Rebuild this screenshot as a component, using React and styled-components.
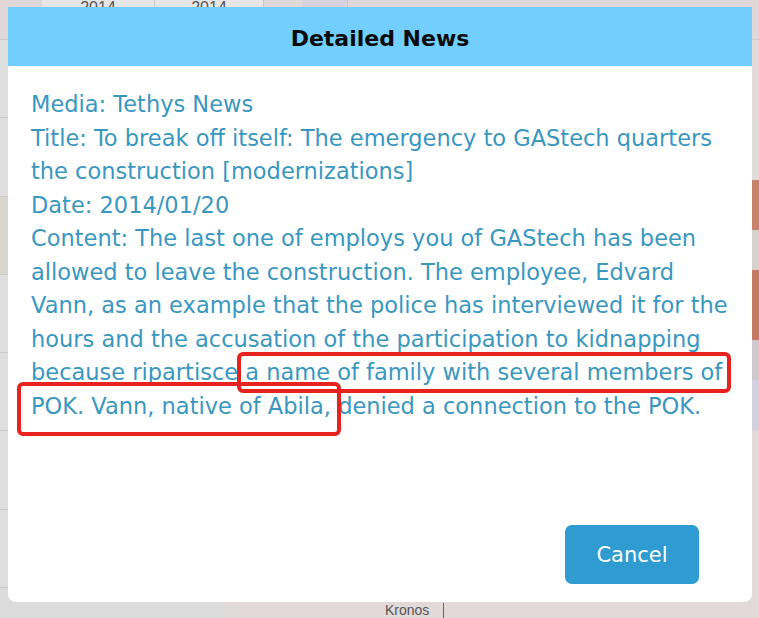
import React from "react";
import styled, { createGlobalStyle } from "styled-components";

const GlobalStyle = createGlobalStyle`
  html, body {
    margin: 0;
    padding: 0;
    overflow: hidden;
  }
  body {
    font-family: "DejaVu Sans", Verdana, sans-serif;
  }
`;

const Page = styled.div`
  position: relative;
  width: 759px;
  height: 618px;
  overflow: hidden;
  display: grid;
  grid-template-columns: 225px 1fr;
  grid-template-rows: 40px 1fr 30px;
  background: #e2d9d9;
`;

const TopRow = styled.div`
  grid-column: 1 / 3;
  display: flex;
  align-items: flex-end;
  background: #e0d8d8;
  border-bottom: 1px solid #cfc8c8;
`;

const YearCell = styled.div`
  width: ${(p) => p.$w}px;
  height: 100%;
  margin-left: ${(p) => p.$ml || 0}px;
  display: flex;
  align-items: flex-start;
  justify-content: center;
  background: ${(p) => p.$bg || "#e6e6e6"};
  border-right: 1px solid #c9c9c9;
  font-family: "Liberation Sans", Arial, sans-serif;
  font-size: 16px;
  color: #555;
  line-height: 1;
  margin-top: -8px;
`;

const SideList = styled.div`
  display: flex;
  flex-direction: column;
  background: #dedede;
  border-right: 1px solid #cfcfcf;
`;

const SideRow = styled.div`
  flex: 1;
  border-bottom: 1px solid #c8c8c8;
  background: ${(p) => p.$bg || "transparent"};
`;

const MapPanel = styled.div`
  display: flex;
  justify-content: flex-end;
  background: #e2d9d9;
`;

const MapStrip = styled.div`
  width: 40px;
  display: flex;
  flex-direction: column;
  padding-top: 80px;
`;

const MapBlock = styled.div`
  height: ${(p) => p.$h}px;
  background: ${(p) => p.$bg};
`;

const BottomRow = styled.div`
  grid-column: 1 / 3;
  display: flex;
  align-items: flex-end;
  background: #e2d9d9;
`;

const BottomGray = styled.div`
  width: 225px;
  height: 100%;
  background: #dcdcdc;
`;

const Kronos = styled.div`
  margin-left: 160px;
  padding-right: 14px;
  border-right: 1px solid #666;
  height: 15px;
  font-family: "Liberation Sans", Arial, sans-serif;
  font-size: 14px;
  color: #555;
  line-height: 15px;
`;

const Modal = styled.div`
  position: absolute;
  left: 8px;
  top: 7px;
  width: 744px;
  height: 595px;
  display: flex;
  flex-direction: column;
  background: #ffffff;
  border-radius: 0 0 8px 8px;
  overflow: hidden;
`;

const Header = styled.div`
  height: 59px;
  box-sizing: border-box;
  padding-top: 4px;
  display: flex;
  align-items: center;
  justify-content: center;
  background: #72cffd;
  font-family: "DejaVu Sans", Verdana, sans-serif;
  font-weight: 700;
  font-size: 22px;
  color: #0a0a0a;
`;

const Body = styled.div`
  position: relative;
  flex: 1;
  padding: 22px 23px 0 23px;
  font-family: "DejaVu Sans", Verdana, sans-serif;
  font-size: 22.5px;
  line-height: 33.5px;
  color: #3a97bf;
`;

const Line = styled.div``;

const Mark = styled.span`
  position: absolute;
  left: ${(p) => p.$x}px;
  top: ${(p) => p.$y}px;
  width: ${(p) => p.$w}px;
  height: ${(p) => p.$h}px;
  border: 4px solid #e8231f;
  border-radius: 6px;
  box-sizing: border-box;
  pointer-events: none;
`;

const Footer = styled.div`
  display: flex;
  justify-content: flex-end;
  padding: 0 53px 18px 0;
`;

const CancelButton = styled.button`
  width: 134px;
  height: 59px;
  border: none;
  border-radius: 7px;
  background: #2e9bd1;
  color: #ffffff;
  font-family: "DejaVu Sans", Verdana, sans-serif;
  font-size: 21px;
  cursor: pointer;
`;

export default function App() {
  return (
    <>
      <GlobalStyle />
      <Page>
        <TopRow>
          <YearCell $w={112} $ml={42}>2014</YearCell>
          <YearCell $w={108}>2014</YearCell>
          <YearCell $w={45} $ml={38} $bg="#d6d3df" />
        </TopRow>
        <SideList>
          <SideRow />
          <SideRow />
          <SideRow $bg="#d9d4cc" />
          <SideRow />
          <SideRow />
          <SideRow />
          <SideRow />
        </SideList>
        <MapPanel>
          <MapStrip>
            <MapBlock $h={60} $bg="#e0dcd8" />
            <MapBlock $h={50} $bg="#c9826a" />
            <MapBlock $h={40} $bg="#d8d2cc" />
            <MapBlock $h={70} $bg="#c47a62" />
            <MapBlock $h={40} $bg="#cfc9cc" />
            <MapBlock $h={50} $bg="#d3d0e0" />
          </MapStrip>
        </MapPanel>
        <BottomRow>
          <BottomGray />
          <Kronos>Kronos</Kronos>
        </BottomRow>

        <Modal>
          <Header>Detailed News</Header>
          <Body>
            <Line>Media: Tethys News</Line>
            <Line>
              Title: To break off itself: The emergency to GAStech quarters the
              construction [modernizations]
            </Line>
            <Line>Date: 2014/01/20</Line>
            <Line>
              Content: The last one of employs you of GAStech has been allowed
              to leave the construction. The employee, Edvard Vann, as an
              example that the police has interviewed it for the hours and the
              accusation of the participation to kidnapping because ripartisce a
              name of family with several members of POK. Vann, native of Abila,
              denied a connection to the POK.
            </Line>
            <Mark $x={229} $y={286} $w={494} $h={41} />
            <Mark $x={9} $y={316} $w={324} $h={54} />
          </Body>
          <Footer>
            <CancelButton>Cancel</CancelButton>
          </Footer>
        </Modal>
      </Page>
    </>
  );
}
